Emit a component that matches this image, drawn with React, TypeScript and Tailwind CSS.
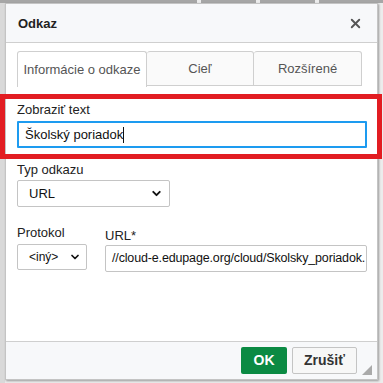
import React from "react";
import { ChevronDown, X } from "lucide-react";

export default function App() {
  const font = { fontFamily: '"Liberation Sans", Arial, sans-serif' };
  return (
    <div
      className="relative w-[383px] h-[383px] overflow-hidden bg-[#ececec] text-[13px] text-[#222]"
      style={font}
    >
      {/* top toolbar strip */}
      <div className="flex h-[3px] gap-[4px]">
        <div className="w-[197px] bg-[#a6a6a6]" />
        <div className="w-[55px] bg-[#a6a6a6]" />
        <div className="w-[55px] bg-[#a6a6a6]" />
        <div className="flex-1 bg-[#a6a6a6]" />
      </div>
      <div className="flex">
        <div className="w-[5px] h-[380px] bg-[#d9d9d9]" />
        {/* dialog */}
        <div className="w-[373px] h-[377px] flex flex-col bg-white border border-[#c4c4c4] shadow-[1px_1px_2px_rgba(0,0,0,0.35)]">
          {/* header */}
          <div className="h-[39px] shrink-0 flex items-center justify-between pl-[12px] pr-[14px] bg-[#f7f8fa] border-b border-[#cfcfcf]">
            <span className="text-[13px] font-bold text-[#222] pt-[1px]">Odkaz</span>
            <X size={15} strokeWidth={3} className="text-[#555]" />
          </div>
          {/* body */}
          <div className="flex-1 flex flex-col pl-[11px] pr-[10px] pt-[8px]">
            {/* tabs */}
            <div className="flex items-start text-[13px] text-[#555]">
              <div className="w-[130px] h-[36px] flex items-center justify-center bg-white border border-b-0 border-[#cfcfcf] rounded-t-[3px]">
                Informácie o odkaze
              </div>
              <div className="w-[107px] h-[35px] flex items-center justify-center bg-[#fafafa] border border-l-0 border-[#cfcfcf] rounded-t-[3px]">
                Cieľ
              </div>
              <div className="w-[108px] h-[35px] flex items-center justify-center bg-[#fafafa] border border-l-0 border-[#cfcfcf] rounded-t-[3px]">
                Rozšírené
              </div>
            </div>
            {/* form */}
            <div className="flex flex-col pt-[15px]">
              <label className="leading-[16px] h-[18px]">Zobraziť text</label>
              <div className="mt-[1px] h-[27px] w-[350px] flex items-center px-[6px] border-2 border-[#1d9bf0] rounded-[1px] text-[13px] text-[#111]">
                Školský poriadok<span className="inline-block w-[1px] h-[16px] bg-[#111]" />
              </div>
              <label className="mt-[14px] leading-[16px] h-[17px]">Typ odkazu</label>
              <div className="mt-[1px] h-[27px] w-[153px] flex items-center justify-between pl-[11px] pr-[6px] border border-[#c4c4c4] rounded-[2px] text-[13px] text-[#111]">
                <span>URL</span>
                <ChevronDown size={13} strokeWidth={3.5} className="text-[#111]" />
              </div>
              <div className="mt-[18px] flex gap-[18px]">
                <div className="flex flex-col">
                  <label className="leading-[16px] h-[19px]">Protokol</label>
                  <div className="h-[26px] w-[70px] flex items-center justify-between pl-[11px] pr-[5px] border border-[#c4c4c4] rounded-[2px] text-[12px] text-[#111]">
                    <span>&lt;iný&gt;</span>
                    <ChevronDown size={12} strokeWidth={3.5} className="text-[#111]" />
                  </div>
                </div>
                <div className="flex flex-col pt-[3px]">
                  <label className="leading-[16px] h-[17px]">URL*</label>
                  <div className="h-[27px] w-[262px] flex items-center pl-[6px] pr-[2px] border border-[#c4c4c4] rounded-[2px] text-[12.5px] tracking-[-0.15px] text-[#111] overflow-hidden whitespace-nowrap">
                    //cloud-e.edupage.org/cloud/Skolsky_poriadok.
                  </div>
                </div>
              </div>
            </div>
          </div>
          {/* footer */}
          <div className="relative h-[38px] shrink-0 flex items-center justify-end gap-[5px] pr-[20px] bg-[#f7f8fa] border-t border-[#cfcfcf]">
            <div className="h-[27px] w-[46px] flex items-center justify-center bg-[#0b8a43] rounded-[2px] text-white font-bold text-[14px]">
              OK
            </div>
            <div className="h-[27px] w-[65px] flex items-center justify-center bg-[#f7f7f7] border border-[#c4c4c4] rounded-[2px] text-[#333] font-bold text-[14px]">
              Zrušiť
            </div>
            <svg className="absolute right-[5px] bottom-[4px]" width="10" height="10" viewBox="0 0 10 10">
              <polygon points="10,0 10,10 0,10" fill="#aaaaaa" />
            </svg>
          </div>
        </div>
      </div>
      {/* red annotation frame */}
      <div className="absolute left-0 top-[94px] w-[382px] h-[65px] border-[5px] border-[#e21d22]" />
    </div>
  );
}
